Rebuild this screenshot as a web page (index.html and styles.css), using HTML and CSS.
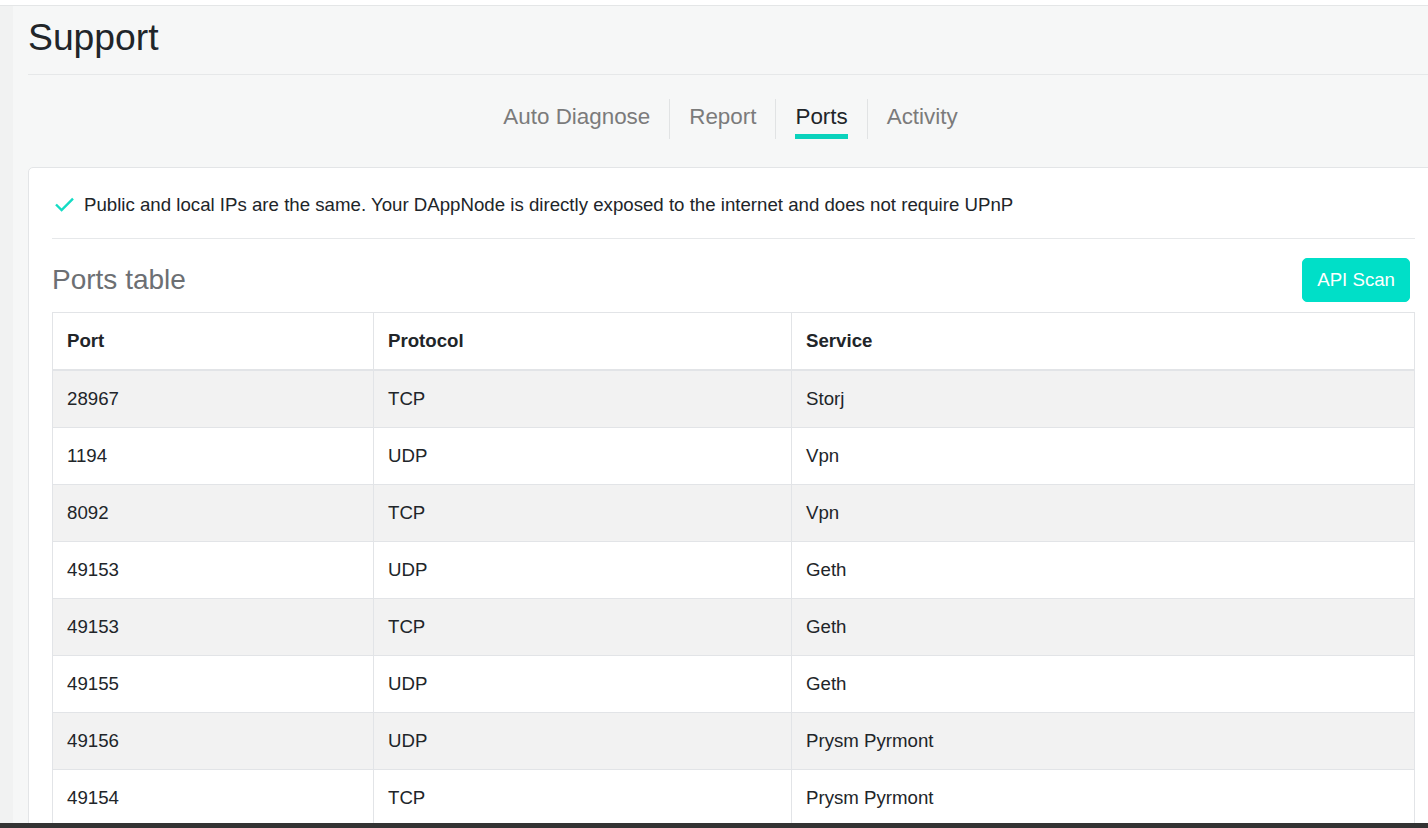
FILE: index.html
```html
<!DOCTYPE html>
<html>
<head>
<meta charset="utf-8">
<link rel="stylesheet" href="styles.css">
</head>
<body>
<div class="topbar"></div>
<div class="layout">
  <div class="sidebar"></div>
  <main class="main">
    <h1 class="page-title">Support</h1>
    <nav class="tabs">
      <div class="tab"><span class="tab-label">Auto Diagnose</span></div>
      <div class="tab"><span class="tab-label">Report</span></div>
      <div class="tab"><span class="tab-label active">Ports</span></div>
      <div class="tab"><span class="tab-label">Activity</span></div>
    </nav>
    <section class="card">
      <div class="alert-row">
        <svg class="check" width="19" height="15" viewBox="0 0 19 15"><polyline points="1,7.5 6.6,13 18,1.6" fill="none" stroke="#14dcc4" stroke-width="2.4"/></svg>
        <span>Public and local IPs are the same. Your DAppNode is directly exposed to the internet and does not require UPnP</span>
      </div>
      <hr class="divider">
      <div class="table-header">
        <h3 class="table-title">Ports table</h3>
        <button class="btn-scan">API Scan</button>
      </div>
      <table class="ports">
        <colgroup><col class="c1"><col class="c2"><col class="c3"></colgroup>
        <thead>
          <tr><th>Port</th><th>Protocol</th><th>Service</th></tr>
        </thead>
        <tbody>
          <tr><td>28967</td><td>TCP</td><td>Storj</td></tr>
          <tr><td>1194</td><td>UDP</td><td>Vpn</td></tr>
          <tr><td>8092</td><td>TCP</td><td>Vpn</td></tr>
          <tr><td>49153</td><td>UDP</td><td>Geth</td></tr>
          <tr><td>49153</td><td>TCP</td><td>Geth</td></tr>
          <tr><td>49155</td><td>UDP</td><td>Geth</td></tr>
          <tr><td>49156</td><td>UDP</td><td>Prysm Pyrmont</td></tr>
          <tr><td>49154</td><td>TCP</td><td>Prysm Pyrmont</td></tr>
        </tbody>
      </table>
    </section>
  </main>
</div>
<div class="taskbar"></div>
</body>
</html>
```
FILE: styles.css
```css
html, body {
  margin: 0;
  padding: 0;
  height: 828px;
  overflow: hidden;
  background: #f6f7f7;
  font-family: "Liberation Sans", Arial, sans-serif;
  font-size: 18.66px;
  line-height: 28px;
  color: #212529;
}
.topbar {
  height: 5px;
  background: #ffffff;
  border-bottom: 1px solid #e4e6e7;
}
.layout {
  display: flex;
  width: 1460px;
  height: 822px;
}
.sidebar {
  width: 13px;
  flex: none;
  background: #f1f2f2;
}
.main {
  width: 1410px;
  flex: none;
  padding-left: 15px;
}
.page-title {
  margin: 9px 0 0 0;
  padding-bottom: 14px;
  font-size: 37.3px;
  line-height: 44.8px;
  font-weight: 400;
  color: #212529;
  border-bottom: 1px solid #e6e8e9;
}
.tabs {
  display: flex;
  justify-content: center;
  margin-top: 24px;
  padding-right: 5px;
  height: 40px;
}
.tab {
  padding: 0 19px;
  display: flex;
  border-left: 1px solid #e1e3e4;
}
.tab:first-child {
  border-left: none;
}
.tab-label {
  font-size: 22.4px;
  line-height: 26px;
  padding-top: 5px;
  padding-bottom: 4px;
  border-bottom: 5px solid transparent;
  color: #7b7b7b;
}
.tab-label.active {
  color: #212529;
  border-bottom-color: #0ad2bc;
}
.card {
  margin-top: 28px;
  width: 1363px;
  padding: 23px;
  background: #ffffff;
  border: 1px solid #e3e5e7;
  border-radius: 5px;
}
.alert-row {
  display: flex;
  align-items: center;
  gap: 10px;
  padding-left: 3px;
}
.check {
  flex: none;
  margin-top: -1px;
}
.divider {
  margin: 19px 0 0 0;
  border: none;
  border-top: 1px solid #e6e8ea;
}
.table-header {
  display: flex;
  justify-content: space-between;
  align-items: center;
  padding-top: 19px;
  margin-bottom: 10px;
}
.table-title {
  margin: 0;
  font-size: 28px;
  line-height: 33.6px;
  font-weight: 400;
  color: #6c6f73;
}
.btn-scan {
  margin-right: 5px;
  font-family: inherit;
  font-size: 18.66px;
  line-height: 28px;
  padding: 7px 14px;
  color: #ffffff;
  background: #00dfc8;
  border: 1px solid #00dfc8;
  border-radius: 5px;
}
.ports {
  width: 1362px;
  border-collapse: collapse;
  table-layout: fixed;
  border: 1px solid #e2e4e7;
}
.c1 { width: 321px; }
.c2 { width: 418px; }
.c3 { width: 623px; }
.ports th, .ports td {
  padding: 14px;
  text-align: left;
  border: 1px solid #e2e4e7;
}
.ports th {
  font-weight: 700;
  border-bottom-width: 2px;
}
.ports tbody tr:nth-child(odd) {
  background: #f2f2f2;
}
.taskbar {
  position: fixed;
  left: 0;
  right: 0;
  bottom: 0;
  height: 5px;
  background: #333333;
}
```
